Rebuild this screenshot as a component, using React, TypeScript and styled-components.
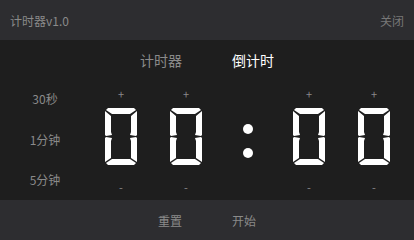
import styled, { createGlobalStyle } from "styled-components";

const GlobalStyle = createGlobalStyle`
  html, body {
    margin: 0;
    padding: 0;
    background: #1e1e1e;
  }
  body {
    font-family: "Noto Sans CJK SC", "Liberation Sans", sans-serif;
  }
`;

const Window = styled.div`
  width: 414px;
  height: 240px;
  display: flex;
  flex-direction: column;
  background: #1e1e1e;
  overflow: hidden;
`;

const TitleBar = styled.div`
  height: 40px;
  background: #2d2d30;
  display: flex;
  align-items: center;
  justify-content: space-between;
  padding: 0 10px;
  font-size: 12px;
  color: #8a8a8a;
`;

const CloseButton = styled.span`
  color: #777;
  cursor: pointer;
`;

const Tabs = styled.div`
  height: 40px;
  display: flex;
  align-items: center;
  justify-content: center;
  gap: 50px;
  font-size: 14px;
`;

const Tab = styled.span<{ $active?: boolean }>`
  color: ${(p) => (p.$active ? "#ffffff" : "#8a8a8a")};
  cursor: pointer;
`;

const Main = styled.div`
  flex: 1;
  display: flex;
`;

const Presets = styled.div`
  width: 90px;
  display: flex;
  flex-direction: column;
  align-items: center;
  justify-content: space-between;
  padding: 10px 0 12px;
  font-size: 12px;
  color: #8a8a8a;
`;

const Clock = styled.div`
  display: flex;
  align-items: center;
  padding-left: 15px;
`;

const Pair = styled.div`
  display: flex;
  gap: 33px;
`;

const DigitColumn = styled.div`
  width: 32px;
  display: flex;
  flex-direction: column;
  align-items: center;
  font-size: 11px;
  color: #8a8a8a;
  line-height: 14px;
`;

const Step = styled.span`
  height: 14px;
  cursor: pointer;
`;

const DigitSvg = styled.svg`
  display: block;
  margin: 7px 0 15px;
`;

const Colon = styled.div`
  width: 91px;
  display: flex;
  flex-direction: column;
  align-items: center;
  gap: 14px;
  padding-top: 2px;
`;

const Dot = styled.div`
  width: 10px;
  height: 10px;
  border-radius: 50%;
  background: #fff;
`;

const Footer = styled.div`
  height: 40px;
  background: #2d2d30;
  display: flex;
  align-items: center;
  justify-content: center;
  gap: 50px;
  font-size: 12px;
  color: #8a8a8a;
`;

const FooterButton = styled.span`
  cursor: pointer;
`;

// segments a..g of a seven segment digit, drawn in a 32x57 box
const SEGMENTS: Record<string, string> = {
  a: "3,0 29,0 31,2 25,6 7,6 1,2",
  b: "32,3 32,27 31,28 25,27 26,24 26,8",
  c: "32,30 32,54 26,50 26,33 25,30 31,29",
  d: "7,51 25,51 31,55 29,57 3,57 1,55",
  e: "0,30 1,29 7,30 6,33 6,50 0,54",
  f: "0,3 6,8 6,24 7,27 1,28 0,27",
  g: "7,26 25,26 28,28.5 25,31 7,31 4,28.5",
};

const DIGITS: Record<string, string> = {
  "0": "abcdef",
  "1": "bc",
  "2": "abged",
  "3": "abgcd",
  "4": "fgbc",
  "5": "afgcd",
  "6": "afgedc",
  "7": "abc",
  "8": "abcdefg",
  "9": "abcdfg",
};

function Digit({ value }: { value: string }) {
  const on = DIGITS[value] ?? "";
  return (
    <DigitColumn>
      <Step>+</Step>
      <DigitSvg width="32" height="57" viewBox="0 0 32 57">
        {on.split("").map((s) => (
          <polygon key={s} points={SEGMENTS[s]} fill="#ffffff" />
        ))}
      </DigitSvg>
      <Step>-</Step>
    </DigitColumn>
  );
}

export default function App() {
  const minutes = "00";
  const seconds = "00";

  return (
    <Window>
      <GlobalStyle />
      <TitleBar>
        <span>计时器v1.0</span>
        <CloseButton>关闭</CloseButton>
      </TitleBar>
      <Tabs>
        <Tab>计时器</Tab>
        <Tab $active>倒计时</Tab>
      </Tabs>
      <Main>
        <Presets>
          <span>30秒</span>
          <span>1分钟</span>
          <span>5分钟</span>
        </Presets>
        <Clock>
          <Pair>
            <Digit value={minutes[0]} />
            <Digit value={minutes[1]} />
          </Pair>
          <Colon>
            <Dot />
            <Dot />
          </Colon>
          <Pair>
            <Digit value={seconds[0]} />
            <Digit value={seconds[1]} />
          </Pair>
        </Clock>
      </Main>
      <Footer>
        <FooterButton>重置</FooterButton>
        <FooterButton>开始</FooterButton>
      </Footer>
    </Window>
  );
}
